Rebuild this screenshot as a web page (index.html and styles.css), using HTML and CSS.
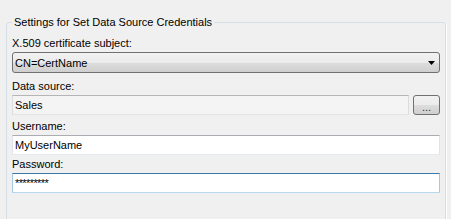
FILE: index.html
```html
<!DOCTYPE html>
<html lang="en">
<head>
  <meta charset="UTF-8" />
  <title>Set Data Source Credentials</title>
  <link rel="stylesheet" href="styles.css">
</head>
<body>

  <fieldset class="group">
    <legend>Settings for Set Data Source Credentials</legend>

    <div class="field first">
      <label>X.509 certificate subject:</label>
      <div class="combo">
        <span>CN=CertName</span>
        <svg class="arrow" width="7" height="4" viewBox="0 0 7 4"><polygon points="0,0 7,0 3.5,4" fill="#000"/></svg>
      </div>
    </div>

    <div class="field">
      <label>Data source:</label>
      <div class="row">
        <input class="text readonly" type="text" value="Sales" readonly>
        <button class="browse">...</button>
      </div>
    </div>

    <div class="field">
      <label>Username:</label>
      <input class="text" type="text" value="MyUserName">
    </div>

    <div class="field last">
      <label>Password:</label>
      <input class="text focused" type="text" value="*********">
    </div>
  </fieldset>

</body>
</html>
```

FILE: styles.css
```css
body {
  margin: 0;
  background-color: #f0f0f0;
  font-family: 'Liberation Sans', Arial, sans-serif;
  font-size: 11px;
  color: #000;
  overflow: hidden;
}
.group {
  box-sizing: border-box;
  width: 440px;
  height: 206px;
  margin: 16px 0 0 6px;
  padding: 8px 5px 0 5px;
  border: 1px solid #d5dfe5;
  border-radius: 3px;
  box-shadow: 1px 1px 0 #fff;
}
.group legend {
  padding: 0 2px;
  line-height: 13px;
}
.field {
  margin-top: 5px;
}
.field.first {
  margin-top: 0;
}
.field.last {
  margin-top: 3px;
}
.field label {
  display: block;
  line-height: 13px;
  margin-bottom: 2px;
}
.combo {
  box-sizing: border-box;
  height: 21px;
  border: 1px solid #707070;
  border-radius: 3px;
  background: linear-gradient(#f2f2f2 0%, #ebebeb 50%, #dddddd 50%, #cfcfcf 100%);
  display: flex;
  align-items: center;
  justify-content: space-between;
  padding: 0 4px 0 2px;
  margin-bottom: 7px;
}
.combo .arrow {
  margin-top: 1px;
}
.row {
  display: flex;
  gap: 4px;
}
.text {
  box-sizing: border-box;
  display: block;
  width: 100%;
  height: 20px;
  margin: 0;
  padding: 0 2px;
  border: 1px solid;
  border-color: #abadb3 #e2e3ea #e3e9ef #e2e3ea;
  background-color: #fff;
  font-family: inherit;
  font-size: 11px;
  color: #000;
  outline: none;
}
.text.readonly {
  width: 397px;
  background-color: #f4f4f4;
  border-color: #b5b5b5 #dcdcdc #e3e3e3 #dcdcdc;
}
.text.focused {
  border-color: #3d7bad #a4c9e3 #b7d9ed #a4c9e3;
  letter-spacing: -0.6px;
}
.browse {
  box-sizing: border-box;
  width: 27px;
  height: 20px;
  margin: 0;
  padding: 5px 0 0 0;
  border: 1px solid #707070;
  border-radius: 3px;
  background: linear-gradient(#f2f2f2 0%, #ebebeb 50%, #dddddd 50%, #cfcfcf 100%);
  font-family: inherit;
  font-size: 11px;
  line-height: 11px;
  color: #333;
}
```
